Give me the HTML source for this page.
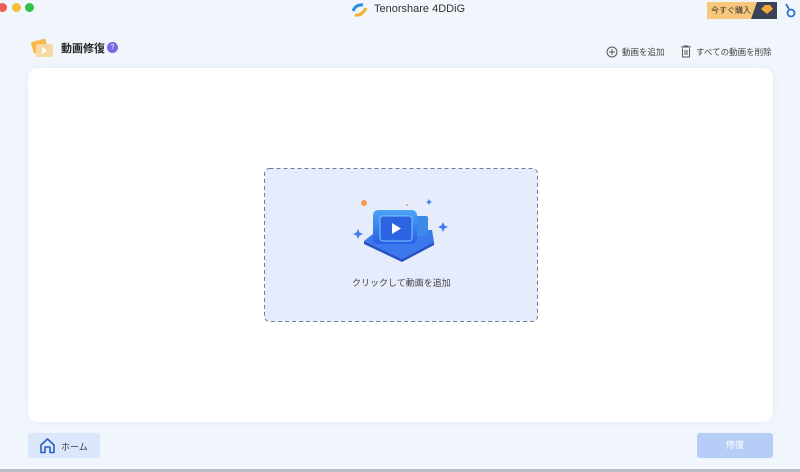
<!DOCTYPE html>
<html><head><meta charset="utf-8"><style>
*{margin:0;padding:0;box-sizing:border-box}
body{width:800px;height:472px;overflow:hidden;background:#f1f6fd;font-family:"Liberation Sans","Noto Sans CJK JP",sans-serif;position:relative}
.abs{position:absolute;white-space:nowrap}
.dot{position:absolute;top:3px;width:9px;height:9px;border-radius:50%}
.card{left:28px;top:68px;width:745px;height:354px;background:#fff;border-radius:10px;box-shadow:0 0 8px rgba(150,180,230,.15)}
</style></head><body>
<div class="dot" style="left:-2px;background:#ee5c55"></div>
<div class="dot" style="left:12px;background:#f4bd3a"></div>
<div class="dot" style="left:25px;background:#32c24a"></div>
<svg class="abs" style="left:350px;top:2px" width="20" height="16" viewBox="0 0 20 16"><path d="M3 9 Q6 2 13 3" stroke="#2a8fe0" stroke-width="3" fill="none"/><path d="M5 13 Q12 14 16 6" stroke="#f2b02c" stroke-width="3" fill="none"/></svg>
<div class="abs" style="left:374px;top:3px;font-size:11px;color:#333">Tenorshare 4DDiG</div>
<div class="abs" style="left:707px;top:2px;width:56px;height:17px;background:#f8c77a"></div>
<div class="abs" style="left:711px;top:5px;font-size:8px;color:#333">今すぐ購入</div>
<svg class="abs" style="left:751px;top:2px" width="26" height="17"><polygon points="6,0 26,0 26,17 0,17" fill="#3a4256"/><polygon points="10,7 14,3 19,3 22,7 16,12" fill="#f3a73a"/></svg>
<svg class="abs" style="left:785px;top:3px" width="12" height="16"><circle cx="6" cy="10" r="3.5" stroke="#2d6fd6" stroke-width="1.8" fill="none"/><path d="M1 1 L4 6" stroke="#2d6fd6" stroke-width="1.8"/></svg>
<svg class="abs" style="left:30px;top:38px" width="24" height="20"><rect x="2" y="2" width="15" height="12" rx="2" transform="rotate(-15 10 8)" fill="#f6b94a"/><rect x="6" y="6" width="17" height="13" rx="2" fill="#f9d8a4"/><polygon points="12,9 17,12.5 12,16" fill="#fff"/></svg>
<div class="abs" style="left:61px;top:40px;font-size:11px;font-weight:bold;color:#222">動画修復</div>
<div class="abs" style="left:107px;top:42px;width:11px;height:11px;border-radius:50%;background:#7b68e6;color:#fff;font-size:7px;text-align:center;line-height:11px">?</div>
<svg class="abs" style="left:606px;top:46px" width="12" height="12"><circle cx="6" cy="6" r="5" stroke="#555" fill="none"/><path d="M6 3v6M3 6h6" stroke="#555"/></svg>
<div class="abs" style="left:622px;top:46px;font-size:8.5px;color:#444">動画を追加</div>
<svg class="abs" style="left:680px;top:45px" width="12" height="13"><path d="M1 2h10M4 2V1h4v1M2.5 3.5v8.5h7V3.5M5 5v5M7 5v5" stroke="#555" fill="none"/></svg>
<div class="abs" style="left:696px;top:46px;font-size:8.5px;color:#444">すべての動画を削除</div>
<div class="abs card"></div>
<svg class="abs" style="left:264px;top:168px" width="274" height="154"><rect x="0.5" y="0.5" width="273" height="153" rx="5" fill="#e6ecfb" stroke="#6b7f9c" stroke-dasharray="4 3"/></svg>
<svg class="abs" style="left:350px;top:196px" width="100" height="70" viewBox="0 0 100 70">
<defs><linearGradient id="g" x1="0" y1="0" x2="0" y2="1"><stop offset="0" stop-color="#4aa3f5"/><stop offset="1" stop-color="#2a5ee8"/></linearGradient></defs>
<circle cx="14" cy="7" r="3" fill="#f39b4a"/><circle cx="57" cy="9" r="1" fill="#f3a060"/>
<path d="M79 3l1 2 2 1-2 1-1 2-1-2-2-1 2-1z" fill="#3a7ef0"/>
<path d="M8 33l1.5 3.5 3.5 1.5-3.5 1.5-1.5 3.5-1.5-3.5-3.5-1.5 3.5-1.5z" fill="#3a7ef0"/>
<path d="M93 26l1.5 3.5 3.5 1.5-3.5 1.5-1.5 3.5-1.5-3.5-3.5-1.5 3.5-1.5z" fill="#3a7ef0"/>
<path d="M14 45 L28 34 L82 34 L84 46 L52 63 Z" fill="#3b78ee"/>
<path d="M14 45 L52 63 L84 46 L84 49 L52 66 L14 48 Z" fill="#2452c8"/>
<rect x="62" y="20" width="16" height="20" rx="2" fill="#3b8ae8"/>
<rect x="23" y="14" width="44" height="34" rx="5" fill="url(#g)"/>
<rect x="30" y="20" width="32" height="25" rx="3" fill="#2c63e0" stroke="#7cc6ff" stroke-width="1"/>
<polygon points="42,27 51,32.5 42,38" fill="#fff"/>
</svg>
<div class="abs" style="left:352px;top:276px;font-size:9px;color:#444">クリックして動画を追加</div>
<div class="abs" style="left:28px;top:433px;width:72px;height:25px;background:#dde7fb;border-radius:3px"></div>
<svg class="abs" style="left:39px;top:437px" width="17" height="17"><path d="M2 8 L8.5 2 L15 8 V15.5 H11 V10 H6 V15.5 H2 Z" stroke="#2a5fbf" stroke-width="1.6" fill="none" stroke-linejoin="round"/></svg>
<div class="abs" style="left:61px;top:440px;font-size:9px;color:#333">ホーム</div>
<div class="abs" style="left:697px;top:433px;width:76px;height:25px;background:#b6cdf8;border-radius:3px;color:#fff;font-size:9px;text-align:center;line-height:25px">修復</div>
<div class="abs" style="left:0;top:469px;width:800px;height:3px;background:#b9bec4"></div>
</body></html>
